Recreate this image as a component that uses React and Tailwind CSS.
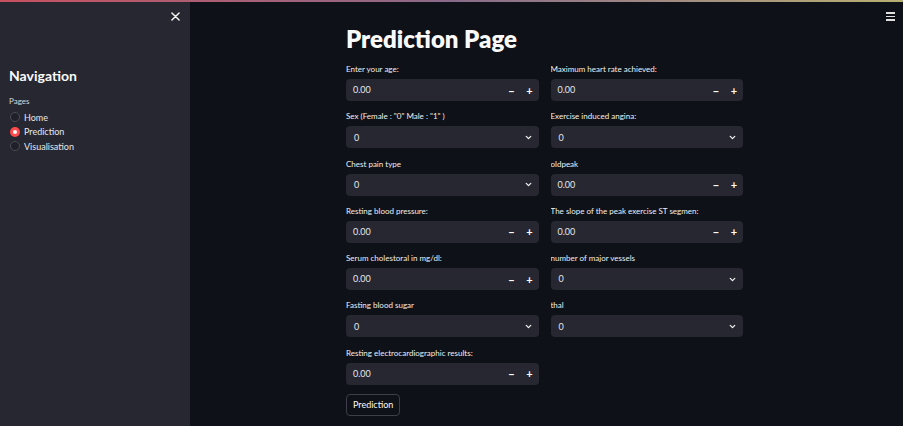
import React, { useState } from 'react';

const fields = [
  { label: 'Enter your age:', type: 'number' },
  { label: 'Maximum heart rate achieved:', type: 'number' },
  { label: 'Sex (Female : "0" Male : "1" )', type: 'select' },
  { label: 'Exercise induced angina:', type: 'select' },
  { label: 'Chest pain type', type: 'select' },
  { label: 'oldpeak', type: 'number' },
  { label: 'Resting blood pressure:', type: 'number' },
  { label: 'The slope of the peak exercise ST segmen:', type: 'number' },
  { label: 'Serum cholestoral in mg/dl:', type: 'number' },
  { label: 'number of major vessels', type: 'select' },
  { label: 'Fasting blood sugar', type: 'select' },
  { label: 'thal', type: 'select' },
  { label: 'Resting electrocardiographic results:', type: 'number' },
];

const NumberField = () => (
  <div className="flex h-[22px] items-center rounded-[4px] bg-[#262730] pl-[7px]">
    <span className="flex-1 text-[9px] text-[#e6e6ea]">0.00</span>
    <span className="w-[18px] text-center text-[11px] font-bold leading-none text-white">−</span>
    <span className="w-[18px] text-center text-[11px] font-bold leading-none text-white">+</span>
  </div>
);

const SelectField = () => (
  <div className="flex h-[22px] items-center rounded-[4px] bg-[#262730] pl-[8px] pr-[6px]">
    <span className="flex-1 text-[9px] text-[#e6e6ea]">0</span>
    <svg width="9" height="9" viewBox="0 0 24 24" fill="none" stroke="#f0f0f0" strokeWidth="3.5" strokeLinecap="round" strokeLinejoin="round">
      <path d="M6 9l6 6 6-6" />
    </svg>
  </div>
);

const Radio = ({ label, checked, onClick }) => (
  <div className="flex h-[14.5px] cursor-pointer items-center gap-[4px]" onClick={onClick}>
    {checked ? (
      <span className="flex h-[10px] w-[10px] items-center justify-center rounded-full bg-[#ff4b4b]">
        <span className="h-[4px] w-[4px] rounded-full bg-white"></span>
      </span>
    ) : (
      <span className="h-[10px] w-[10px] rounded-full border border-[#4a4b55] bg-[#1f2029]"></span>
    )}
    <span className="text-[9px] text-[#e8e8ec]">{label}</span>
  </div>
);

export default function App() {
  const [page, setPage] = useState('Prediction');

  return (
    <div className="flex h-screen flex-col overflow-hidden bg-[#0e1117]" style={{ fontFamily: 'Lato, "Noto Sans", sans-serif' }}>
      <div className="h-[2px] w-full bg-gradient-to-r from-[#c8505f] via-[#8a6a8a] to-[#b8b070]"></div>
      <div className="flex flex-1">
        {/* sidebar */}
        <aside className="relative w-[190px] bg-[#262730] pl-[9px]">
          <div className="flex justify-end pr-[10px] pt-[10px]">
            <svg width="9" height="9" viewBox="0 0 10 10" stroke="#f5f5f5" strokeWidth="1.6" strokeLinecap="round">
              <path d="M1 1l8 8M9 1l-8 8" />
            </svg>
          </div>
          <h2 className="mt-[46px] text-[14px] font-bold leading-[18px] text-[#fafafa]">Navigation</h2>
          <div className="mt-[10px] text-[8px] leading-[12px] text-[#d8d8dc]">Pages</div>
          <div className="mt-[3px] flex flex-col pl-[1px]">
            {['Home', 'Prediction', 'Visualisation'].map(p => (
              <Radio key={p} label={p} checked={page === p} onClick={() => setPage(p)} />
            ))}
          </div>
        </aside>

        {/* main */}
        <main className="relative flex-1 pl-[156px] pt-[21px]">
          <div className="absolute right-[8px] top-[10px] flex flex-col gap-[2px]">
            <span className="h-[1.5px] w-[9px] bg-[#e0e0e0]"></span>
            <span className="h-[1.5px] w-[9px] bg-[#e0e0e0]"></span>
            <span className="h-[1.5px] w-[9px] bg-[#e0e0e0]"></span>
          </div>
          <div className="w-[397px]">
            <h1 className="text-[24px] font-extrabold leading-[32px] text-[#fafafa]">Prediction Page</h1>
            <div className="mt-[8px] grid grid-cols-2 gap-x-[12px] gap-y-[9.3px]">
              {fields.map(f => (
                <div key={f.label}>
                  <div className="mb-[4px] truncate text-[8px] leading-[12px] text-[#f0f0f2]">{f.label}</div>
                  {f.type === 'number' ? <NumberField /> : <SelectField />}
                </div>
              ))}
            </div>
            <button className="mt-[9px] h-[22px] rounded-[4px] border border-[#3d3e48] bg-[#0e1117] px-[6px] text-[9px] text-[#fafafa]">
              Prediction
            </button>
          </div>
        </main>
      </div>
    </div>
  );
}
